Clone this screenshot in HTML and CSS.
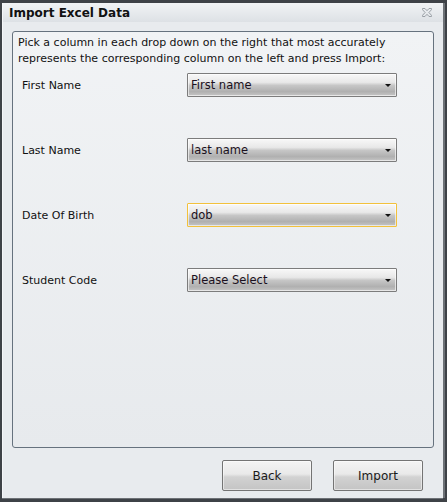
FILE: index.html
```html
<!DOCTYPE html>
<html>
<head>
<meta charset="utf-8">
<link rel="stylesheet" href="styles.css">
</head>
<body>
<div class="window">
  <div class="titlebar">
    <span class="title">Import Excel Data</span>
    <svg class="close" width="10" height="9" viewBox="0 0 10 9">
      <path d="M0.5 0.5h2.5l2 2.2 2-2.2h2.5v1.2l-2.6 2.8 2.6 2.8v1.2h-2.5l-2-2.2-2 2.2h-2.5v-1.2l2.6-2.8-2.6-2.8z" fill="none" stroke="#9aa0a6" stroke-width="1"/>
    </svg>
  </div>
  <div class="content">
    <div class="panel">
      <p class="intro">Pick a column in each drop down on the right that most accurately represents the corresponding column on the left and press Import:</p>
      <div class="rows">
        <div class="row"><span class="label">First Name</span><div class="select"><span>First name</span><i class="arrow"></i></div></div>
        <div class="row"><span class="label">Last Name</span><div class="select"><span>last name</span><i class="arrow"></i></div></div>
        <div class="row"><span class="label">Date Of Birth</span><div class="select focus"><span>dob</span><i class="arrow"></i></div></div>
        <div class="row"><span class="label">Student Code</span><div class="select"><span>Please Select</span><i class="arrow"></i></div></div>
      </div>
    </div>
    <div class="buttons">
      <button class="btn">Back</button>
      <button class="btn">Import</button>
    </div>
  </div>
</div>
</body>
</html>
```
FILE: styles.css
```css
html, body {
  margin: 0;
  padding: 0;
}
body {
  width: 447px;
  height: 502px;
  background: #3e4247;
  padding: 3px 0 0 2px;
  box-sizing: border-box;
  font-family: "DejaVu Sans", Verdana, sans-serif;
  font-size: 11px;
  color: #111;
}
.window {
  width: 441px;
  height: 495px;
  background: #e8ebee;
  border-left: 1px solid #f4f6f8;
  box-sizing: border-box;
  display: flex;
  flex-direction: column;
  box-shadow: 2px 0 0 #6d7176, 0 1px 0 #6d7176;
}
.titlebar {
  height: 19px;
  flex: none;
  display: flex;
  align-items: center;
  justify-content: space-between;
  padding: 0 11px 0 6px;
  background: linear-gradient(#f1f3f5, #dde1e5);
}
.title {
  font-weight: bold;
  font-size: 12px;
  color: #111;
}
.close {
  display: block;
}
.content {
  flex: 1;
  display: flex;
  flex-direction: column;
  padding: 9px 9px 7px 9px;
}
.panel {
  height: 417px;
  box-sizing: border-box;
  border: 1px solid #66727e;
  border-radius: 3px;
  background: linear-gradient(#f1f3f5, #e7eaed);
  padding: 3px 5px 0 5px;
}
.intro {
  margin: 0;
  line-height: 16px;
}
.rows {
  display: flex;
  flex-direction: column;
  gap: 41px;
  margin-top: 6px;
  padding-left: 4px;
}
.row {
  display: flex;
  align-items: center;
  height: 24px;
}
.label {
  width: 165px;
  flex: none;
}
.select {
  width: 210px;
  height: 24px;
  box-sizing: border-box;
  border: 1px solid #7c7c7c;
  border-radius: 1px;
  background: linear-gradient(#f8f8f8 0%, #e8e8e8 38%, #c6c6c6 52%, #b0b0b0 80%, #c6c6c6 100%);
  display: flex;
  align-items: center;
  justify-content: space-between;
  padding: 0 5px 0 3px;
  font-size: 11.5px;
  color: #1a1020;
  box-shadow: inset 0 0 0 1px rgba(255,255,255,0.6);
}
.select.focus {
  border-color: #f2c13c;
}
.arrow {
  width: 0;
  height: 0;
  border-left: 3px solid transparent;
  border-right: 3px solid transparent;
  border-top: 3px solid #111;
}
.buttons {
  display: flex;
  justify-content: flex-end;
  gap: 21px;
  margin-top: 12px;
  padding-right: 11px;
}
.btn {
  width: 90px;
  height: 31px;
  border: 1px solid #747474;
  border-radius: 2px;
  background: linear-gradient(#f4f4f4 0%, #e9e9e9 45%, #d2d2d2 55%, #c4c4c4 100%);
  font-family: "DejaVu Sans", Verdana, sans-serif;
  font-size: 12px;
  color: #1a1a1a;
  padding: 0;
  box-shadow: inset 0 0 0 1px rgba(255,255,255,0.5);
}
```
